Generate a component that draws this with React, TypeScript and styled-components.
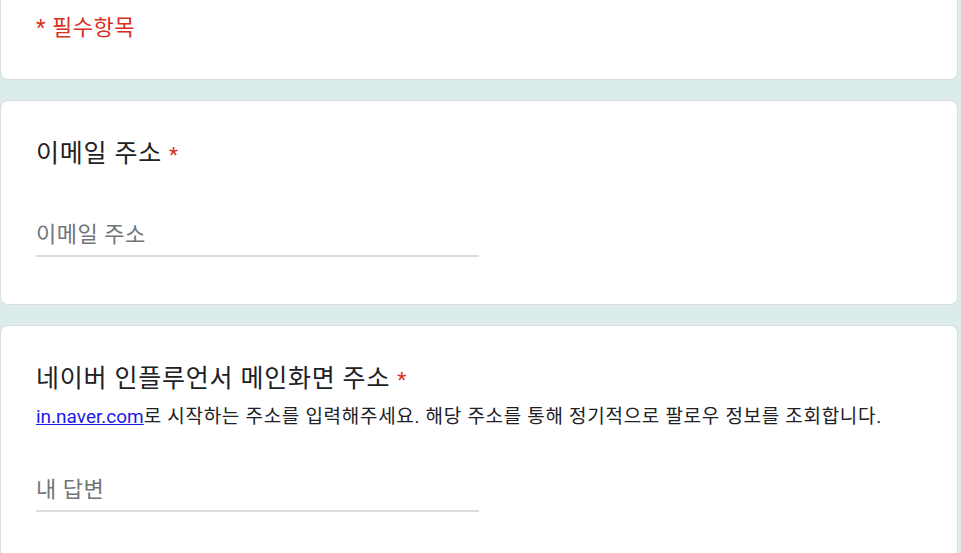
import styled, { createGlobalStyle } from "styled-components";

const GlobalStyle = createGlobalStyle`
  html, body {
    margin: 0;
    padding: 0;
    background: #dcecea;
  }
  body {
    font-family: Roboto, "Noto Sans CJK KR", sans-serif;
    color: #202124;
  }
`;

function App() {
  return (
    <>
      <GlobalStyle />
      <Page>
        <Card $cut>
          <RequiredNote>* 필수항목</RequiredNote>
        </Card>

        <Card>
          <Title>
            이메일 주소 <Star>*</Star>
          </Title>
          <Field>
            <Input placeholder="이메일 주소" />
          </Field>
        </Card>

        <Card>
          <Title>
            네이버 인플루언서 메인화면 주소 <Star>*</Star>
          </Title>
          <Description>
            <Link href="#">in.naver.com</Link>로 시작하는 주소를 입력해주세요. 해당 주소를 통해
            정기적으로 팔로우 정보를 조회합니다.
          </Description>
          <Field $tight>
            <Input placeholder="내 답변" />
          </Field>
        </Card>
      </Page>
    </>
  );
}

export default App;

const Page = styled.div`
  display: flex;
  flex-direction: column;
  gap: 20px;
  width: 958px;
  height: 553px;
  overflow: hidden;
`;

const Card = styled.section<{ $cut?: boolean }>`
  flex-shrink: 0;
  background: #fff;
  border: 1px solid #dadce0;
  border-top: ${(p) => (p.$cut ? "none" : "1px solid #dadce0")};
  border-radius: ${(p) => (p.$cut ? "0 0 8px 8px" : "8px")};
  padding: ${(p) => (p.$cut ? "14px 35px 37px" : "37px 35px 47px")};
`;

const RequiredNote = styled.div`
  color: #d93025;
  font-size: 22px;
  letter-spacing: 0.5px;
  line-height: 28px;
`;

const Title = styled.div`
  font-size: 25px;
  letter-spacing: 0.8px;
  line-height: 32px;
  color: #202124;
`;

const Star = styled.span`
  color: #d93025;
  font-size: 21px;
`;

const Description = styled.div`
  margin-top: 8px;
  font-size: 19px;
  letter-spacing: 0.7px;
  line-height: 26px;
  color: #202124;
`;

const Link = styled.a`
  color: #1a1ae6;
  letter-spacing: 0;
  text-decoration: underline;
`;

const Field = styled.div<{ $tight?: boolean }>`
  margin-top: ${(p) => (p.$tight ? "45px" : "49px")};
  width: 443px;
  border-bottom: 2px solid #dadce0;
  padding-bottom: 5px;
`;

const Input = styled.input`
  display: block;
  width: 100%;
  box-sizing: border-box;
  border: none;
  outline: none;
  padding: 0;
  background: transparent;
  font-family: Roboto, "Noto Sans CJK KR", sans-serif;
  font-size: 22px;
  letter-spacing: 0.5px;
  line-height: 30px;
  height: 30px;
  color: #202124;

  &::placeholder {
    color: #70757a;
  }
`;
